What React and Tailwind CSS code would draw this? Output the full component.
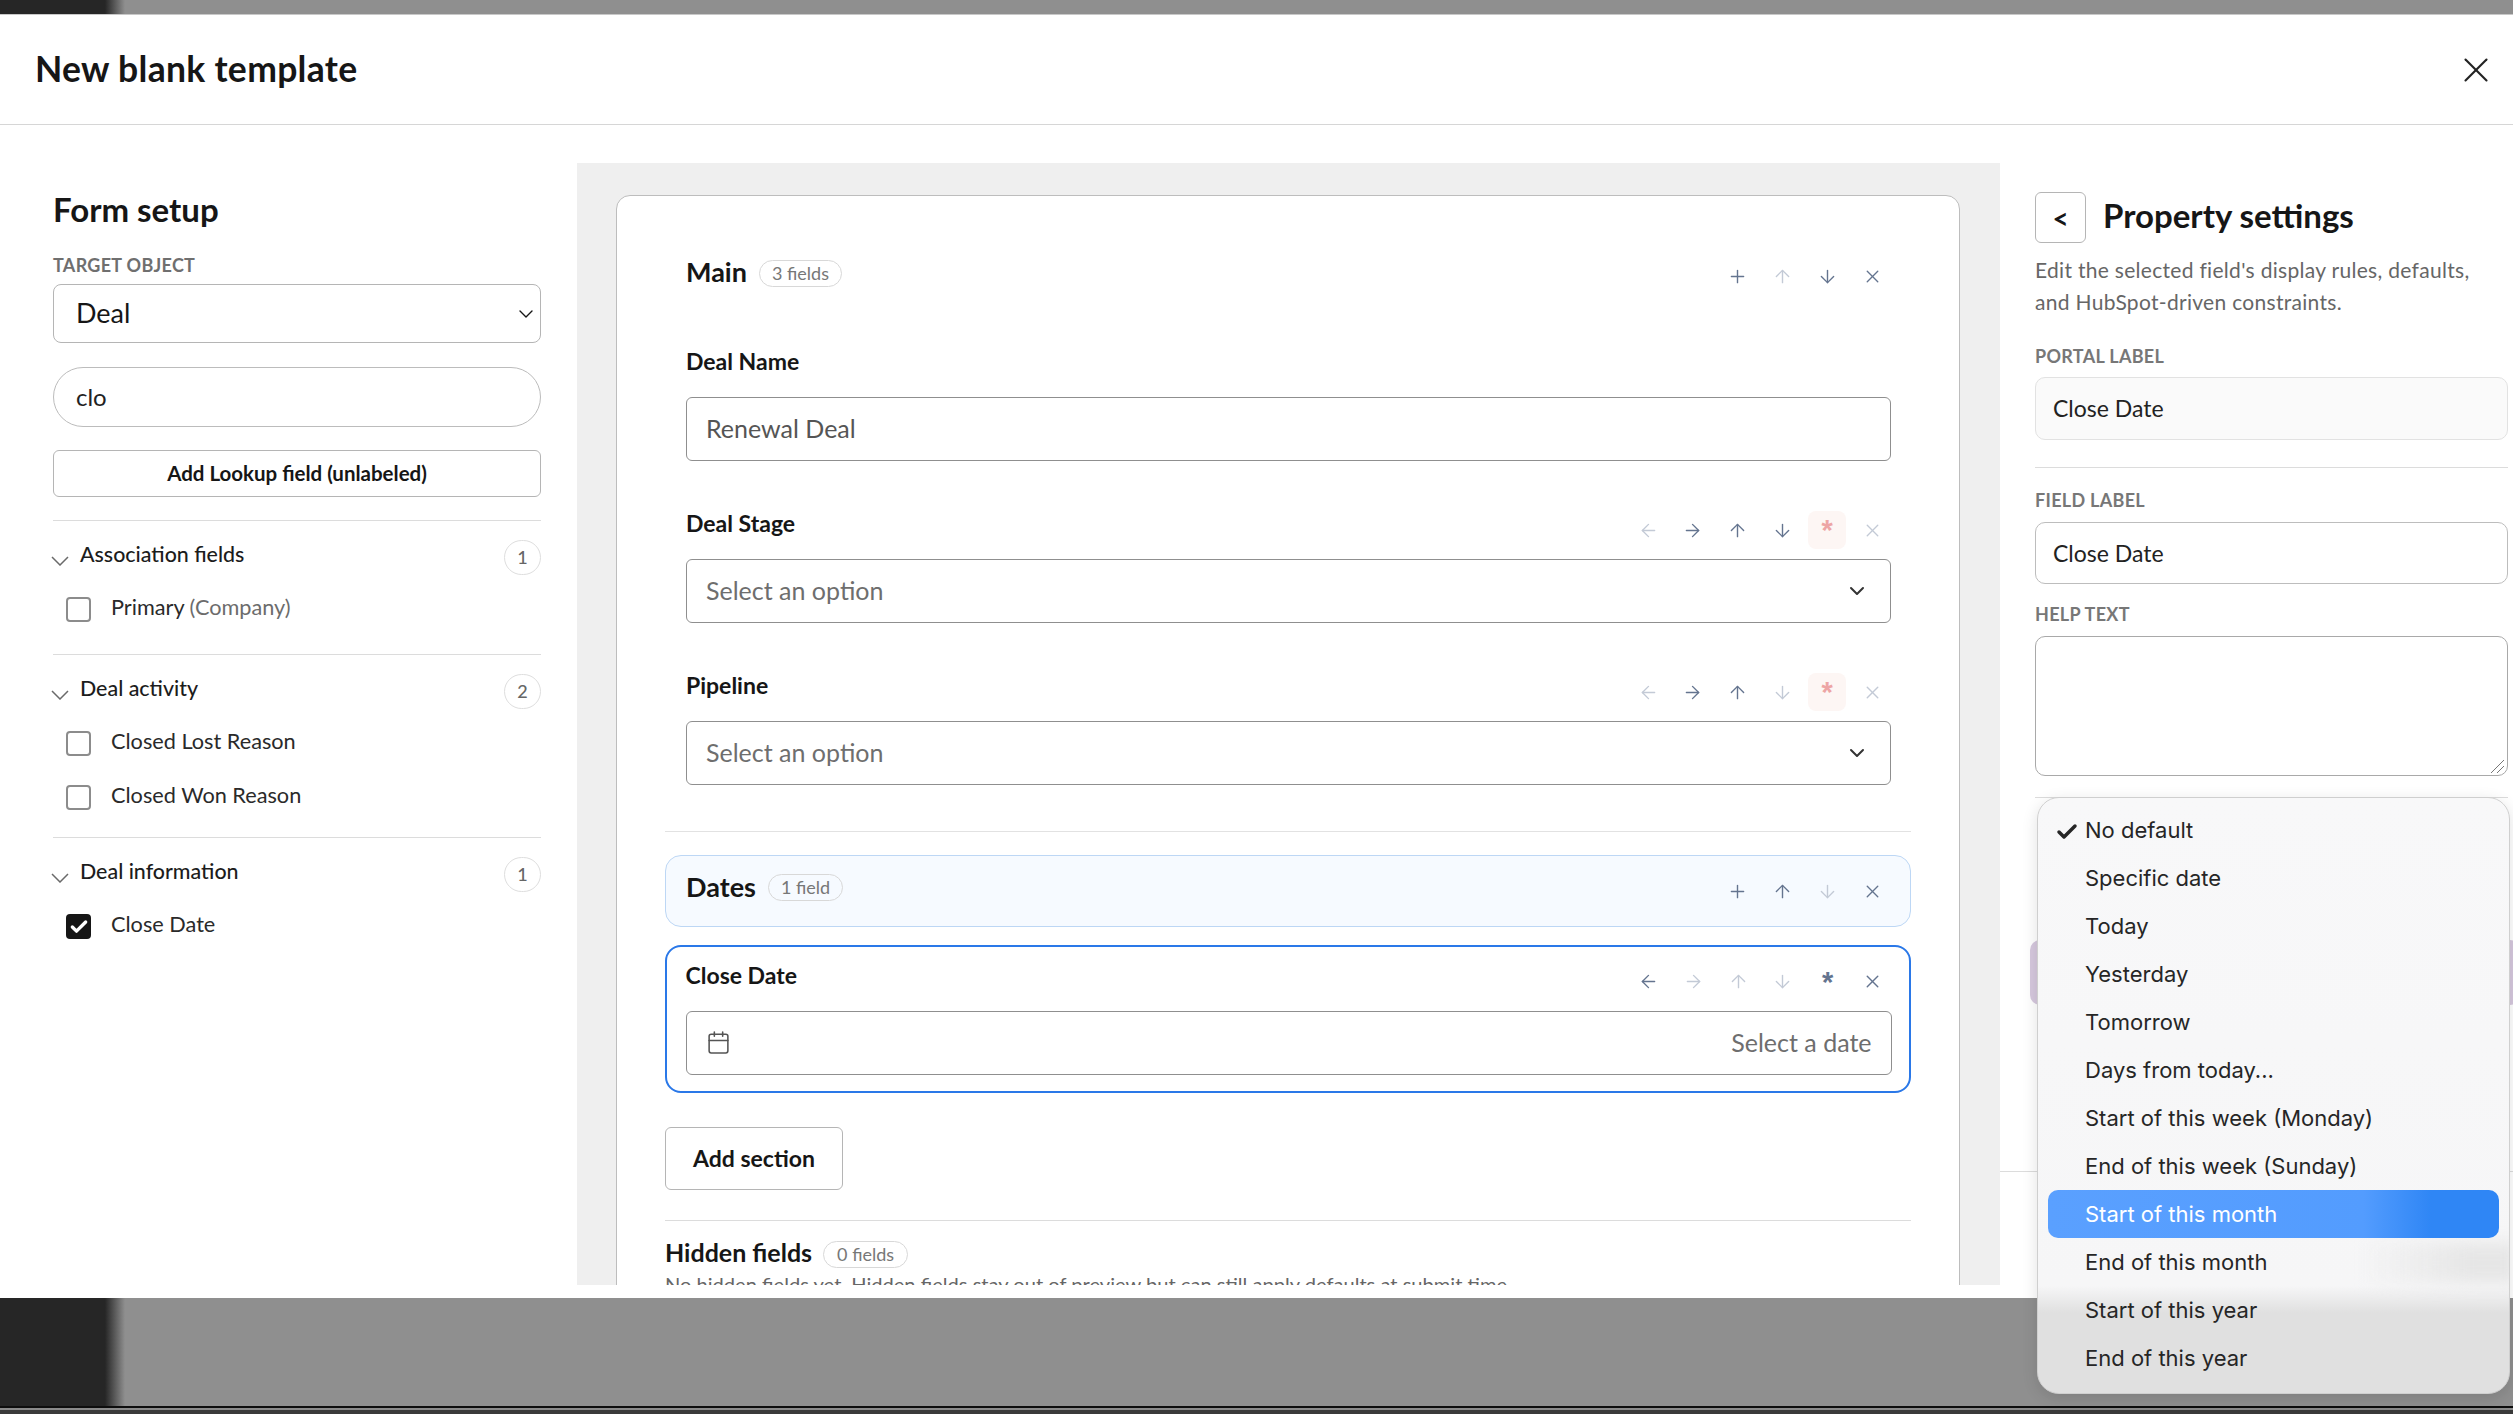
import { ArrowLeft, ArrowRight, ArrowUp, ArrowDown, Plus, X, ChevronDown, Calendar, Check } from "lucide-react"

const GROUPS = [
  { title: "Association fields", count: 1, pad: "pb-[32px]", items: [{ label: "Primary", note: "(Company)" }] },
  { title: "Deal activity", count: 2, pad: "pb-[27px]", items: [{ label: "Closed Lost Reason" }, { label: "Closed Won Reason" }] },
  { title: "Deal information", count: 1, pad: "pb-[27px]", items: [{ label: "Close Date", checked: true }] },
]

const DATE_OPTIONS = [
  "No default",
  "Specific date",
  "Today",
  "Yesterday",
  "Tomorrow",
  "Days from today...",
  "Start of this week (Monday)",
  "End of this week (Sunday)",
  "Start of this month",
  "End of this month",
  "Start of this year",
  "End of this year",
]

const ICONS = { left: ArrowLeft, right: ArrowRight, up: ArrowUp, down: ArrowDown, plus: Plus, x: X }

function IconBtn({ name, off }) {
  const Icon = ICONS[name]
  return (
    <span className={`flex h-[38px] w-[38px] items-center justify-center ${off ? "text-[#c3cad6]" : "text-[#64748f]"}`}>
      <Icon size={21} strokeWidth={1.6} />
    </span>
  )
}

function Star({ active }) {
  return (
    <span className={`flex h-[38px] w-[38px] justify-center rounded-[8px] pt-[5px] font-['Liberation_Sans',sans-serif] text-[29px] font-bold leading-[29px] ${active ? "text-[#64748f]" : "bg-[#fdf6f4] text-[#eda5a5]"}`}>
      *
    </span>
  )
}

function Actions({ items }) {
  return (
    <div className="flex items-center gap-[6.8px]">
      {items.map(([name, off], i) =>
        name === "star" ? <Star key={i} active={off} /> : <IconBtn key={i} name={name} off={off} />
      )}
    </div>
  )
}

function CountPill({ children, className = "" }) {
  return (
    <span className={`flex h-[27px] items-center rounded-full border border-[#d8d8d8] px-[12px] text-[18px] text-[#777] ${className}`}>
      {children}
    </span>
  )
}

function LeftPanel() {
  return (
    <div className="w-[577px] shrink-0 pl-[53px] pr-[36px] pt-[65px]">
      <h2 className="flex h-[40px] items-center text-[33px] font-bold text-[#161616]">Form setup</h2>
      <div className="mt-[23px] flex h-[24px] items-center text-[18px] font-bold tracking-[0.3px] text-[#6f6f6f]">TARGET OBJECT</div>
      <div className="mt-[7px] flex h-[59px] items-center justify-between rounded-[8px] border border-[#b5b5b5] pl-[22px] pr-[2px] text-[27px] text-[#161616]">
        Deal
        <ChevronDown size={24} strokeWidth={1.4} />
      </div>
      <div className="mt-[24px] flex h-[60px] items-center rounded-full border border-[#bcbcbc] pl-[22px] text-[24px] text-[#222]">clo</div>
      <button className="mt-[23px] block h-[47px] w-full rounded-[6px] border border-[#b5b5b5] text-[20.5px] font-bold text-[#161616]">
        Add Lookup field (unlabeled)
      </button>
      <div className="mt-[23px]">
        {GROUPS.map((g) => (
          <div key={g.title} className={`border-t border-[#dcdcdc] pt-[19px] ${g.pad}`}>
            <div className="flex h-[35px] items-center">
              <svg width="18" height="10" viewBox="0 0 18 10" className="ml-[-2px] mt-[7px] text-[#6a6a6a]">
                <path d="M1 1l8 8 8-8" fill="none" stroke="currentColor" strokeWidth="1.5" />
              </svg>
              <span className="ml-[11px] mt-[-6px] text-[21.4px] font-medium text-[#1c1c1c]">{g.title}</span>
              <span className="ml-auto flex h-[35px] w-[37px] items-center justify-center rounded-full border border-[#dedede] text-[18px] font-medium text-[#666]">
                {g.count}
              </span>
            </div>
            <div className="mt-[22px] flex flex-col gap-[29px] pl-[13px]">
              {g.items.map((it) => (
                <div key={it.label} className="flex h-[25px] items-center">
                  {it.checked ? (
                    <span className="flex h-[25px] w-[25px] items-center justify-center rounded-[4px] bg-[#161616] text-white">
                      <Check size={20} strokeWidth={4} />
                    </span>
                  ) : (
                    <span className="h-[25px] w-[25px] rounded-[4px] border-2 border-[#8c8c8c]" />
                  )}
                  <span className="ml-[20px] mt-[-5px] text-[21.7px] text-[#2a2a2a]">
                    {it.label}
                    {it.note && <span className="ml-[5px] text-[#6c6c6c]">{it.note}</span>}
                  </span>
                </div>
              ))}
            </div>
          </div>
        ))}
      </div>
    </div>
  )
}

function Field({ label, actions, children, className = "" }) {
  return (
    <div className={className}>
      <div className="flex h-[38px] items-center justify-between">
        <span className="mt-[-13px] text-[23px] font-bold text-[#161616]">{label}</span>
        {actions && <Actions items={actions} />}
      </div>
      {children}
    </div>
  )
}

function Box({ children, tone = "text-[#555]" }) {
  return (
    <div className={`mt-[10px] flex h-[64px] items-center justify-between rounded-[6px] border border-[#8f8f8f] px-[19px] text-[25px] ${tone}`}>
      {children}
    </div>
  )
}

function CenterPanel() {
  return (
    <div className="mt-[38px] h-[1122px] w-[1423px] shrink-0 overflow-hidden bg-[#efefef] pl-[39px] pt-[32px]">
      <div className="h-[1200px] w-[1344px] rounded-t-[14px] border border-[#bdbdbd] bg-white pl-[48px] pr-[48px] pt-[61px]">
        <div className="pl-[21px] pr-[20px]">
          <div className="flex h-[38px] items-center">
            <span className="mt-[-8px] text-[27px] font-bold text-[#161616]">Main</span>
            <CountPill className="ml-[12px] mt-[-5px]">3 fields</CountPill>
            <div className="ml-auto">
              <Actions items={[["plus"], ["up", true], ["down"], ["x"]]} />
            </div>
          </div>
          <Field label="Deal Name" className="mt-[54px]">
            <Box>Renewal Deal</Box>
          </Field>
          <Field
            label="Deal Stage"
            className="mt-[50px]"
            actions={[["left", true], ["right"], ["up"], ["down"], ["star"], ["x", true]]}
          >
            <Box tone="text-[#6e6e6e]">
              Select an option
              <ChevronDown size={24} strokeWidth={2} className="mr-[2px] text-[#333]" />
            </Box>
          </Field>
          <Field
            label="Pipeline"
            className="mt-[50px]"
            actions={[["left", true], ["right"], ["up"], ["down", true], ["star"], ["x", true]]}
          >
            <Box tone="text-[#6e6e6e]">
              Select an option
              <ChevronDown size={24} strokeWidth={2} className="mr-[2px] text-[#333]" />
            </Box>
          </Field>
        </div>
        <div className="mt-[46px] h-px bg-[#e2e2e2]" />
        <div className="mt-[23px] flex h-[72px] items-center rounded-[16px] border border-[#bdd7f5] bg-[#f6faff] pl-[20px] pr-[19px]">
          <span className="mt-[-7px] text-[27px] font-bold text-[#161616]">Dates</span>
          <CountPill className="ml-[12px] mt-[-7px]">1 field</CountPill>
          <div className="ml-auto">
            <Actions items={[["plus"], ["up"], ["down", true], ["x"]]} />
          </div>
        </div>
        <div className="mt-[18px] h-[148px] rounded-[16px] border-[2.5px] border-[#2a78e8] pl-[18.5px] pr-[17.5px] pt-[15.5px]">
          <Field label="Close Date" actions={[["left"], ["right", true], ["up", true], ["down", true], ["star", true], ["x"]]}>
            <Box tone="text-[#6e6e6e]">
              <Calendar size={25} strokeWidth={1.5} className="text-[#555]" />
              Select a date
            </Box>
          </Field>
        </div>
        <button className="mt-[34px] block h-[63px] w-[178px] rounded-[6px] border border-[#b5b5b5] text-[23px] font-bold text-[#161616]">
          Add section
        </button>
        <div className="mt-[30px] h-px bg-[#dcdcdc]" />
        <div className="mt-[20px] flex h-[27px] items-center">
          <span className="mt-[-3px] text-[25px] font-bold text-[#161616]">Hidden fields</span>
          <CountPill className="ml-[11px] px-[13px]">0 fields</CountPill>
        </div>
        <p className="mt-[3px] text-[20.1px] leading-[26px] text-[#666]">
          No hidden fields yet. Hidden fields stay out of preview but can still apply defaults at submit time.
        </p>
      </div>
    </div>
  )
}

function SmallLabel({ children, className = "" }) {
  return (
    <div className={`flex h-[24px] items-center text-[18px] font-bold tracking-[0.3px] text-[#777] ${className}`}>{children}</div>
  )
}

function RightPanel() {
  return (
    <div className="relative w-[513px] shrink-0 pl-[35px] pt-[67px]">
      <div className="flex items-center">
        <span className="flex h-[51px] w-[51px] items-center justify-center rounded-[6px] border border-[#b5b5b5] text-[28px] font-bold text-[#161616]">&lt;</span>
        <h2 className="ml-[17px] mt-[-4px] text-[33px] font-bold text-[#161616]">Property settings</h2>
      </div>
      <p className="mt-[11px] w-[472px] text-[21px] leading-[32px] tracking-[0.3px] text-[#666]">
        Edit the selected field's display rules, defaults, and HubSpot-driven constraints.
      </p>
      <SmallLabel className="mt-[26px]">PORTAL LABEL</SmallLabel>
      <div className="mt-[9px] flex h-[63px] w-[473px] items-center rounded-[10px] border border-[#e2e2e2] bg-[#fafafa] pl-[17px] text-[23px] text-[#222]">Close Date</div>
      <div className="mt-[27px] h-px w-[473px] bg-[#dcdcdc]" />
      <SmallLabel className="mt-[20px]">FIELD LABEL</SmallLabel>
      <div className="mt-[10px] flex h-[62px] w-[473px] items-center rounded-[10px] border border-[#bdbdbd] pl-[17px] text-[23px] text-[#222]">Close Date</div>
      <SmallLabel className="mt-[18px]">HELP TEXT</SmallLabel>
      <div className="relative mt-[10px] h-[140px] w-[473px] rounded-[10px] border border-[#a9a9a9]">
        <svg width="15" height="15" viewBox="0 0 15 15" className="absolute bottom-[1px] right-[2px] text-[#777]">
          <path d="M1 14L14 1M7 14l7-7" fill="none" stroke="currentColor" strokeWidth="1" />
        </svg>
      </div>
      <div className="mt-[21px] h-px w-[473px] bg-[#dcdcdc]" />
      <div className="ml-[-5px] mt-[142px] h-[65px] w-[490px] rounded-[10px] bg-[#d6c8de]" />
      <div className="ml-[-35px] mt-[166px] h-px bg-[#dcdcdc]" />
    </div>
  )
}

function DateMenu() {
  return (
    <div className="absolute left-[2037px] top-[797px] h-[597px] w-[473px] overflow-hidden rounded-[22px] border border-[#cfcfcf] bg-[linear-gradient(180deg,#f8f8f9_0%,#f6f6f7_82%,#e0e0e0_86.5%,#e0e0e0_100%)] px-[10px] pt-[8px] font-['Inter',sans-serif] text-[22px] text-[#262626] shadow-[0_4px_16px_rgba(0,0,0,0.12)]">
      <div className="absolute left-[320px] top-[445px] h-[40px] w-[160px] bg-[linear-gradient(90deg,transparent,#e6e6e6_70%)] blur-[8px]" />
      {DATE_OPTIONS.map((opt, i) => (
        <div
          key={opt}
          className={`relative flex h-[48px] items-center rounded-[10px] pl-[37px] ${
            opt === "Start of this month" ? "bg-[linear-gradient(90deg,#5aa0ff_0%,#539cfe_70%,#2f86f5_85%,#2f86f5_100%)] text-white" : ""
          }`}
        >
          {i === 0 && <Check size={24} strokeWidth={3.5} className="absolute left-[7px] top-[14px]" />}
          {opt}
        </div>
      ))}
    </div>
  )
}

export default function App() {
  return (
    <div className="relative h-[1414px] w-[2513px] overflow-hidden bg-[#8f8f8f] font-['Lato',sans-serif]">
      <div className="h-[14px] bg-[linear-gradient(90deg,#262626_0,#262626_105px,#8f8f8f_125px)]" />
      <div className="h-[1284px] border-t border-[#c8c8c8] bg-white">
        <div className="flex h-[110px] items-center justify-between border-b border-[#d6d6d6] pl-[35px] pr-[16px]">
          <h1 className="mt-[-2px] text-[35.5px] font-bold tracking-[0.3px] text-[#161616]">New blank template</h1>
          <X size={42} strokeWidth={1.2} className="text-[#222]" />
        </div>
        <div className="flex">
          <LeftPanel />
          <CenterPanel />
          <RightPanel />
        </div>
      </div>
      <div className="h-[108px] bg-[linear-gradient(90deg,#262626_0,#262626_105px,#8f8f8f_125px)]" />
      <div className="h-[2px] bg-[#0d0d0d]" />
      <div className="h-[2px] bg-[#8a8a8a]" />
      <div className="h-[4px] bg-[#3a3a3a]" />
      <DateMenu />
    </div>
  )
}
